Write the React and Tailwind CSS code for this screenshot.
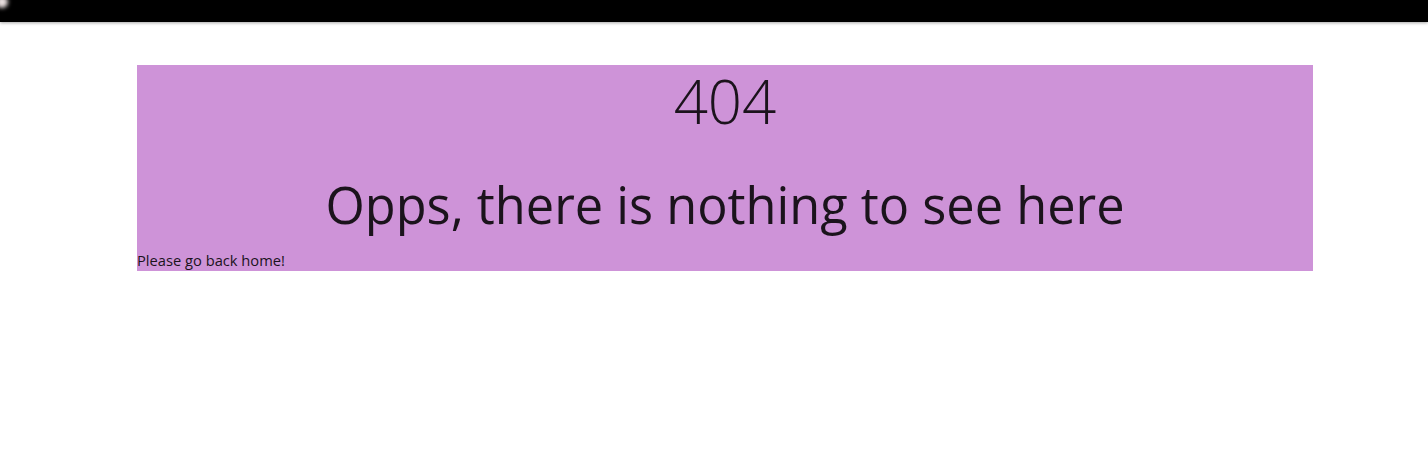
export default function App() {
    return (
        <div className="min-h-screen bg-white font-['Open_Sans',sans-serif] text-[#1b131c]">
            <div className="relative h-[22px] bg-black shadow-[0_1px_3px_rgba(0,0,0,0.35)]">
                <div className="absolute -left-1 -top-1 h-[12px] w-[12px] rounded-full bg-[#e8dede] blur-[2px]" />
            </div>
            <div className="ml-[137px] mt-[43px] w-[1176px] bg-[#ce93d8]">
                <h1 className="text-center text-[60px] font-light leading-[72px]">404</h1>
                <h2 className="mt-[37px] text-center text-[50.5px] leading-[61px]">Opps, there is nothing to see here</h2>
                <p className="mt-[15px] text-[14.7px] leading-[21px]">Please go back home!</p>
            </div>
        </div>
    );
}
